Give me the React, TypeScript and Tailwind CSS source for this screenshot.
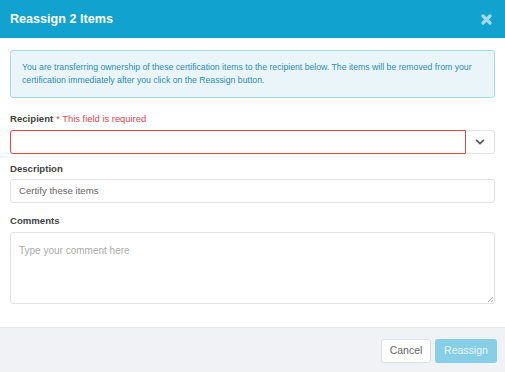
import { FaChevronDown } from 'react-icons/fa';

const labelCls = 'text-[9.6px] font-bold text-[#444] leading-[12px]';
const inputBorder = 'border border-[#e1e3ea] rounded-[3px] bg-white';

export default function App() {
  return (
    <div
      className="w-[505px] h-[372px] bg-white flex flex-col overflow-hidden"
      style={{ fontFamily: '"Liberation Sans", Arial, sans-serif' }}
    >
      {/* Header */}
      <div className="h-[38px] shrink-0 bg-[#12a2cf] flex items-center justify-between pl-[10px] pr-[13px]">
        <h1 className="text-[12.6px] font-bold text-white">Reassign 2 Items</h1>
        <svg width="11" height="11" viewBox="0 0 11 11">
          <path d="M2 2L9 9M9 2L2 9" stroke="#a6d9ec" strokeWidth="3.2" strokeLinecap="round" />
        </svg>
      </div>

      {/* Body */}
      <div className="flex-1 px-[10px] pt-[12px]">
        <div className="h-[48px] border border-[#a8d9ea] bg-[#eaf5fa] rounded-[3px] px-[11px] pt-[10px]">
          <p className="text-[8.7px] leading-[13px] text-[#2a8db3]">
            You are transferring ownership of these certification items to the recipient below. The items will be removed from your
            certification immediately after you click on the Reassign button.
          </p>
        </div>

        <div className="mt-[15px] flex items-center gap-[3px]">
          <span className={labelCls}>Recipient</span>
          <span className="text-[9.4px] text-[#e0474c] leading-[12px]">* This field is required</span>
        </div>
        <div className="mt-[5px] flex h-[24px]">
          <div className="flex-1 border border-[#e0474c] rounded-l-[3px] bg-white" />
          <div className="w-[29px] border border-l-0 border-[#e1e3ea] rounded-r-[3px] bg-white flex items-center justify-center">
            <FaChevronDown size={10} className="text-[#555]" />
          </div>
        </div>

        <div className={`${labelCls} mt-[9px]`}>Description</div>
        <div className={`${inputBorder} mt-[4px] h-[24px] flex items-center px-[8px]`}>
          <span className="text-[9.6px] text-[#666]">Certify these items</span>
        </div>

        <div className={`${labelCls} mt-[12px]`}>Comments</div>
        <div className={`${inputBorder} mt-[5px] h-[72px] relative px-[8px] pt-[4px]`}>
          <span className="text-[10px] text-[#aaa]">Type your comment here</span>
          <svg className="absolute right-[1px] bottom-[1px]" width="6" height="6" viewBox="0 0 6 6">
            <path d="M6 1L1 6M6 4L4 6" stroke="#999" strokeWidth="0.8" />
          </svg>
        </div>
      </div>

      {/* Footer */}
      <div className="h-[45px] shrink-0 bg-[#f1f2f6] border-t border-[#e6e8ed] flex items-start justify-end gap-[4px] pt-[11px] pr-[8px]">
        <button className="h-[24px] w-[50px] bg-white border border-[#dcdfe6] rounded-[3px] text-[10.5px] text-[#666]">
          Cancel
        </button>
        <button className="h-[24px] w-[62px] bg-[#86cfe6] rounded-[3px] text-[10.5px] text-[#e6f6fb]">
          Reassign
        </button>
      </div>
    </div>
  );
}
